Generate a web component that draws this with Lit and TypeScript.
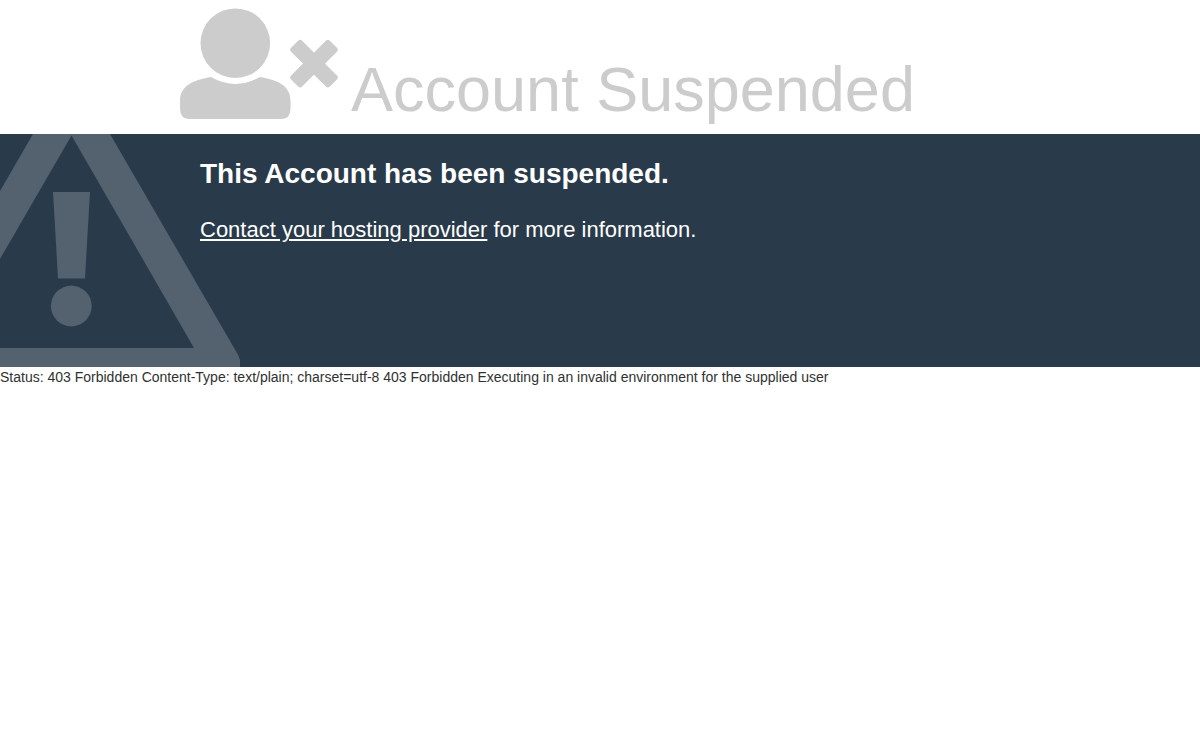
import { LitElement, html, css } from "lit";
import { customElement } from "lit/decorators.js";

@customElement("app-root")
export class AppRoot extends LitElement {
  static styles = css`
    :host {
      display: block;
      background: #fff;
      color: #2f3230;
      font-family: "Liberation Sans", Arial, sans-serif;
      font-size: 14px;
      line-height: 20px;
    }
    .head {
      display: flex;
      align-items: flex-end;
      gap: 11px;
      padding: 8px 20px 9px 180px;
      color: #ccc;
    }
    .user {
      flex: none;
      width: 160px;
      height: 112px;
      margin-bottom: 5px;
    }
    .title {
      margin: 0;
      font-size: 63px;
      font-weight: 400;
      line-height: 72px;
    }
    .info {
      display: flex;
      background: #293a4a;
      color: #fff;
    }
    .warning {
      flex: none;
      display: block;
      width: 240px;
      height: 233px;
      margin-right: -40px;
    }
    .message {
      flex: 1;
      padding-top: 20px;
    }
    .lead {
      margin: 0 0 20px;
      font-size: 28px;
      line-height: 40px;
    }
    .contact {
      margin: 0;
      font-size: 22px;
      line-height: 32px;
    }
    .link {
      color: inherit;
      text-decoration: underline;
    }
    .status {
      margin: 0;
    }
  `;

  render() {
    return html`
      <header class="head">
        <svg class="user" viewBox="0 0 160 112" fill="currentColor" aria-hidden="true">
          <circle cx="55.3" cy="35.2" r="34.8" />
          <path d="M31 69Q55.500 83 80 69C97 72 110.500 77 110.500 93V101Q110.500 111 100.500 111H10Q0 111 0 101V93C0 77 14 72 31 69Z" />
          <g transform="translate(134 55.700) rotate(45)">
            <rect x="-27.400" y="-7.800" width="54.800" height="15.600" rx="2.800" />
            <rect x="-7.800" y="-27.400" width="15.600" height="54.800" rx="2.800" />
          </g>
        </svg>
        <h1 class="title">Account Suspended</h1>
      </header>
      <section class="info">
        <svg class="warning" viewBox="0 0 240 233" fill="#54616e" aria-hidden="true">
          <path d="M33 0H110L237 219Q239 222 240 226V233H0V214H194L71.500 1.500L0 125V57Z" />
          <path d="M53 58H90L85 144.500H58Z" />
          <circle cx="71.300" cy="172" r="20.400" />
        </svg>
        <div class="message">
          <h2 class="lead">This Account has been suspended.</h2>
          <p class="contact">
            <a class="link" href="#contact">Contact your hosting provider</a> for more information.
          </p>
        </div>
      </section>
      <p class="status">
        Status: 403 Forbidden Content-Type: text/plain; charset=utf-8 403 Forbidden Executing in an
        invalid environment for the supplied user
      </p>
    `;
  }
}
